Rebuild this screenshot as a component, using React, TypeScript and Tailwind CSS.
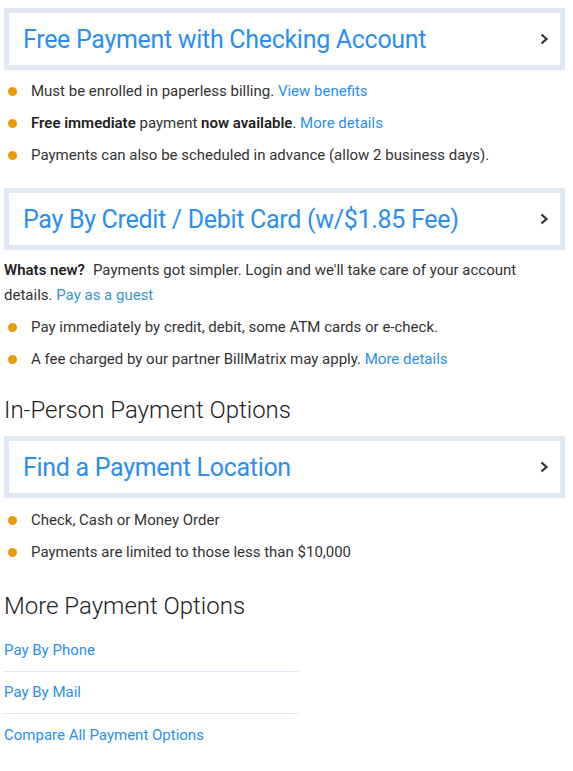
import { ReactNode } from "react";

function Chevron() {
  return (
    <svg width="10" height="14" viewBox="0 0 10 14" fill="none">
      <path d="M2.5 2.5l5 4.5-5 4.5" stroke="#333" strokeWidth="2.2" />
    </svg>
  );
}

function OptionCard({ title }: { title: string }) {
  return (
    <a
      href="#"
      className="flex h-[62px] w-[561px] items-center justify-between border-[5px] border-[#e0e8f3] bg-white pl-[14px] pr-[11px]"
    >
      <span className="text-[25px] leading-none tracking-[-0.3px] text-[#2a8ff0]">{title}</span>
      <Chevron />
    </a>
  );
}

function Bullet({ children }: { children: ReactNode }) {
  return (
    <li className="flex h-[32px] items-center">
      <span className="ml-[4px] mr-[14px] h-[9px] w-[9px] shrink-0 rounded-full bg-[#e79c0c]" />
      <span>{children}</span>
    </li>
  );
}

function Link({ children }: { children: ReactNode }) {
  return (
    <a href="#" className="text-[#2a8ff0]">
      {children}
    </a>
  );
}

export default function App() {
  return (
    <div
      className="min-h-screen bg-white px-[4px] pt-[8px] text-[15px] text-[#333]"
      style={{ fontFamily: "Roboto, 'Liberation Sans', sans-serif" }}
    >
      {/* Checking account */}
      <OptionCard title="Free Payment with Checking Account" />
      <ul className="mt-[5px]">
        <Bullet>
          Must be enrolled in paperless billing. <Link>View benefits</Link>
        </Bullet>
        <Bullet>
          <b className="font-semibold text-[#222]">Free immediate</b> payment{" "}
          <b className="font-semibold text-[#222]">now available</b>. <Link>More details</Link>
        </Bullet>
        <Bullet>Payments can also be scheduled in advance (allow 2 business days).</Bullet>
      </ul>

      {/* Card */}
      <div className="mt-[17px]">
        <OptionCard title="Pay By Credit / Debit Card (w/$1.85 Fee)" />
      </div>
      <div className="mt-[8px] leading-[25px]">
        <div>
          <b className="font-semibold text-[#222]">Whats new?</b>
          <span className="ml-[8px]">Payments got simpler. Login and we'll take care of your account</span>
        </div>
        <div>
          <span>details.</span>{" "}
          <a href="#" className="text-[#3796c6]">Pay as a guest</a>
        </div>
      </div>
      <ul className="mt-[3px]">
        <Bullet>Pay immediately by credit, debit, some ATM cards or e-check.</Bullet>
        <Bullet>
          A fee charged by our partner BillMatrix may apply. <Link>More details</Link>
        </Bullet>
      </ul>

      {/* In person */}
      <h2 className="mt-[19px] text-[24px] font-light leading-[32px] text-[#222]">In-Person Payment Options</h2>
      <div className="mt-[10px]">
        <OptionCard title="Find a Payment Location" />
      </div>
      <ul className="mt-[6px]">
        <Bullet>Check, Cash or Money Order</Bullet>
        <Bullet>Payments are limited to those less than $10,000</Bullet>
      </ul>

      {/* More */}
      <h2 className="mt-[22px] text-[24px] font-light leading-[32px] text-[#222]">More Payment Options</h2>
      <ul className="mt-[8px] w-[295px]">
        <li className="flex h-[42px] items-center border-b border-[#dde8f8]">
          <Link>Pay By Phone</Link>
        </li>
        <li className="flex h-[42px] items-center border-b border-[#dde8f8]">
          <Link>Pay By Mail</Link>
        </li>
        <li className="flex h-[42px] items-center">
          <Link>Compare All Payment Options</Link>
        </li>
      </ul>
    </div>
  );
}
